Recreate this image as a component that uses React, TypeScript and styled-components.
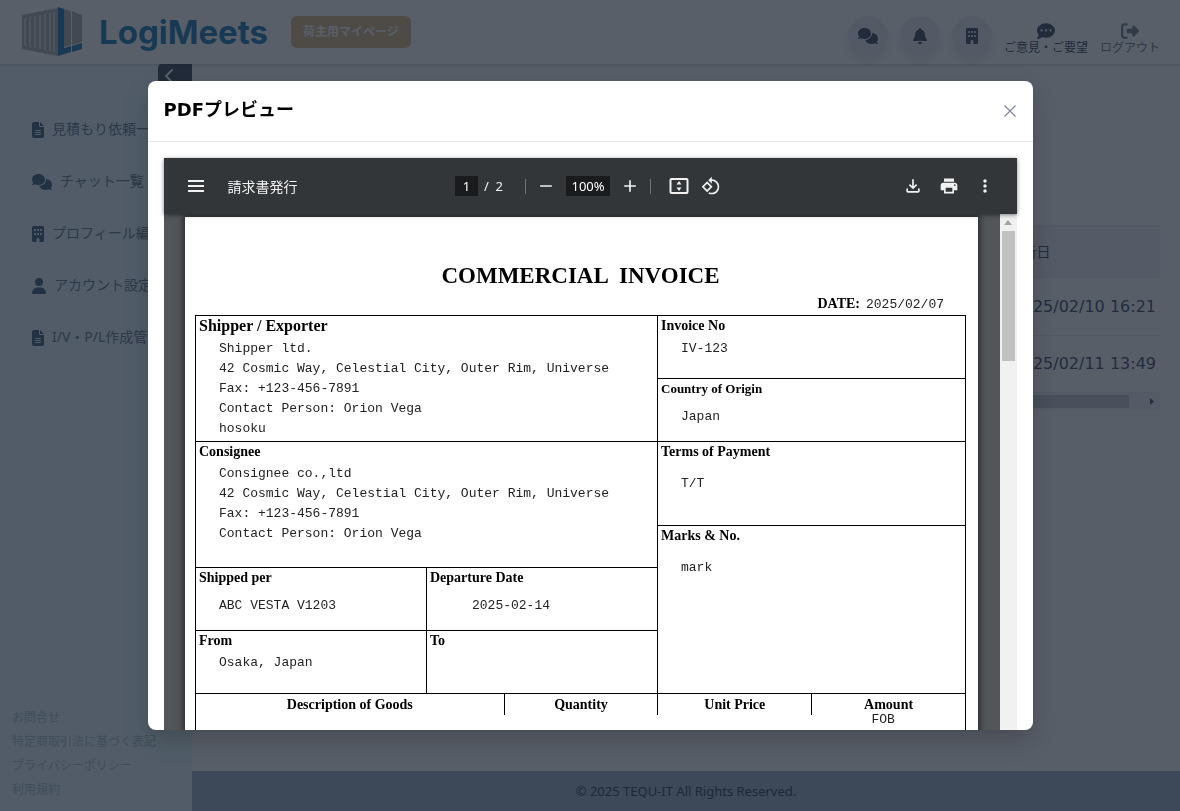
import React from "react";
import styled, { createGlobalStyle } from "styled-components";
import {
  FaBell,
  FaBuilding,
  FaChevronLeft,
  FaCommentDots,
  FaComments,
  FaFileLines,
  FaRightFromBracket,
  FaUser,
} from "react-icons/fa6";
import { MdAdd, MdMoreVert, MdOutlineFileDownload, MdPrint, MdRemove, MdRotate90DegreesCcw } from "react-icons/md";

const GlobalStyle = createGlobalStyle`
  *, *::before, *::after { box-sizing: border-box; }
  body {
    margin: 0;
    font-family: "Noto Sans", "Noto Sans CJK JP", sans-serif;
    font-size: 14px;
    background: #fffcfe;
  }
  button { font: inherit; color: inherit; background: none; border: 0; padding: 0; cursor: pointer; }
  a { color: inherit; text-decoration: none; }
  svg { display: block; flex: none; }
`;

/* ---------- page shell ---------- */

const Shell = styled.div`
  display: flex;
  flex-direction: column;
  min-height: 100vh;
`;

const TopBar = styled.header`
  display: flex;
  align-items: center;
  height: 64px;
  padding: 0 20px 0 22px;
  background: #fff;
  box-shadow: 0 1px 3px rgba(0, 0, 0, 0.2);
  z-index: 1;
`;

const Brand = styled.a`
  display: flex;
  align-items: center;
  gap: 16px;
  color: #2a7fbd;
  font: 700 33px/40px Inter, sans-serif;
`;

const RoleBadge = styled.span`
  margin-left: 23px;
  padding: 0 12px;
  border-radius: 6px;
  background: #dcb78c;
  color: #fff;
  font-size: 12px;
  font-weight: 700;
  line-height: 32px;
`;

const TopActions = styled.div`
  display: flex;
  align-items: center;
  gap: 12px;
  margin-left: auto;
  padding-top: 8px;
`;

const RoundButton = styled.button<{ $icon: number }>`
  display: grid;
  place-items: center;
  width: 40px;
  height: 40px;
  border-radius: 50%;
  background: #efedf4;
  color: #46516b;
  box-shadow: 0 6px 10px rgba(40, 50, 90, 0.1);
  svg { height: 16px; width: ${(p) => p.$icon}px; }
`;

const LabelledButton = styled.button<{ $soft?: boolean }>`
  display: flex;
  flex-direction: column;
  align-items: center;
  padding-top: 6px;
  color: ${(p) => (p.$soft ? "#7a8494" : "#46516b")};
  font-size: 12px;
  line-height: 16px;
  svg { width: 18px; height: 18px; }
`;

const Columns = styled.div`
  display: flex;
  flex: 1;
`;

const SideBar = styled.aside`
  display: flex;
  flex-direction: column;
  width: 192px;
  flex: none;
  background: #e6f6ff;
`;

const CollapseButton = styled.button`
  align-self: flex-end;
  width: 34px;
  height: 24px;
  padding: 0 4px;
  border-radius: 4px 0 0 0;
  background: #465064;
  color: #fff;
  svg { width: 16px; height: 16px; }
`;

const SideNav = styled.nav`
  display: flex;
  flex-direction: column;
  margin-top: 14px;
  padding-left: 32px;
`;

const SideLink = styled.a<{ $icon: number }>`
  display: flex;
  align-items: center;
  gap: 8px;
  height: 52px;
  color: #6b7f96;
  white-space: nowrap;
  overflow: hidden;
  svg { height: 16px; width: ${(p) => p.$icon}px; margin-top: 4px; color: #4b6486; }
`;

const LegalLinks = styled.nav`
  display: flex;
  flex-direction: column;
  margin-top: auto;
  padding: 0 12px 9px;
  color: #b1c1cf;
  font-size: 12px;
  line-height: 24px;
`;

const Content = styled.main`
  display: flex;
  flex-direction: column;
  flex: 1;
`;

const ListArea = styled.section`
  flex: 1;
  padding: 161px 20px 20px;
`;

const ListTable = styled.table`
  width: 150px;
  margin-left: auto;
  border-collapse: separate;
  border-spacing: 0;
  color: #4b5570;
  th {
    height: 54px;
    padding: 0 0 4px;
    border-top: 1px solid #e9e6f0;
    background: #f2edf8;
    text-align: left;
    font-weight: 400;
  }
  td {
    height: 57px;
    padding: 0 4px 2px;
    border-bottom: 1px solid #eae9ee;
    font: 16px "DejaVu Sans", sans-serif;
    white-space: nowrap;
  }
`;

const HorizontalScroll = styled.div`
  display: flex;
  align-items: center;
  justify-content: flex-end;
  gap: 21px;
  height: 17px;
  padding-right: 6px;
  background: #f4f0f8;
  color: #596275;
`;

const HorizontalThumb = styled.div`
  flex: 1;
  height: 13px;
  background: #cbcad2;
`;

const PageFooter = styled.footer`
  height: 40px;
  background: #a3b1cb;
  color: #3e475c;
  font-size: 13px;
  line-height: 40px;
  text-align: center;
`;

/* ---------- dialog ---------- */

const Backdrop = styled.div`
  position: fixed;
  inset: 0;
  z-index: 10;
  display: grid;
  place-items: center;
  background: rgba(17, 27, 40, 0.7);
`;

const Dialog = styled.section`
  display: flex;
  flex-direction: column;
  width: 75vw;
  height: 80vh;
  border-radius: 8px;
  overflow: hidden;
  background: #fff;
  box-shadow: 0 10px 24px rgba(0, 0, 0, 0.2);
`;

const DialogHeader = styled.header`
  display: flex;
  flex: none;
  align-items: center;
  justify-content: space-between;
  height: 61px;
  padding: 0 13px 0 16px;
  border-bottom: 1px solid #e5e7eb;
  h2 { margin: 0 0 2px; font: 700 18px/28px "DejaVu Sans", "Noto Sans CJK JP", sans-serif; }
`;

const DialogBody = styled.div`
  display: flex;
  flex: 1;
  min-height: 0;
  padding: 16px 16px 0;
`;

const Viewer = styled.div`
  display: flex;
  flex-direction: column;
  flex: 1;
  min-width: 0;
  background: #525659;
`;

const ViewerBar = styled.div`
  position: relative;
  z-index: 1;
  display: grid;
  grid-template-columns: 1fr auto 1fr;
  align-items: center;
  flex: none;
  height: 56px;
  padding: 0 22px;
  background: #323639;
  color: #f1f1f1;
  box-shadow: 0 1px 4px rgba(0, 0, 0, 0.5);
`;

const BarGroup = styled.div<{ $gap: number; $align?: string }>`
  display: flex;
  align-items: center;
  gap: ${(p) => p.$gap}px;
  justify-content: ${(p) => p.$align ?? "flex-start"};
`;

const FitGroup = styled(BarGroup)`
  padding: 0 4px 0 8px;
`;

const BarInput = styled.input<{ $width: number }>`
  width: ${(p) => p.$width}px;
  height: 20px;
  padding: 0;
  border: 0;
  background: #191b1c;
  color: #fff;
  font: 13px "Noto Sans", sans-serif;
  text-align: center;
`;

const PageTotal = styled.span`
  margin: 0 12px 0 -4px;
  font-size: 13px;
`;

const BarDivider = styled.span`
  width: 1px;
  height: 15px;
  background: #707477;
`;

const BarButton = styled.button`
  display: grid;
  place-items: center;
  svg { width: 20px; height: 20px; }
`;

const ViewerScroll = styled.div`
  display: flex;
  flex: 1;
  min-height: 0;
`;

const PageArea = styled.div`
  flex: 1;
  min-width: 0;
  padding: 3px 21px 0;
  overflow: hidden;
`;

const ScrollTrack = styled.div`
  display: flex;
  flex-direction: column;
  align-items: center;
  width: 17px;
  background: #f1f1f1;
  svg { margin: 6px 0; }
`;

const ScrollThumb = styled.div`
  width: 13px;
  height: 130px;
  background: #c1c1c1;
`;

/* ---------- invoice sheet ---------- */

const Sheet = styled.article`
  max-width: 793px;
  min-height: 1122px;
  margin: 0 auto;
  padding: 45px 12px 0 10px;
  background: #fff;
  color: #000;
  font-family: "Liberation Serif", serif;
  box-shadow: 0 0 6px 2px rgba(0, 0, 0, 0.5);
  h1 { margin: 0; font-size: 23px; line-height: 28px; text-align: center; white-space: pre; }
`;

const Entry = styled.span`
  color: #222;
  font: 13px/20px "Liberation Mono", monospace;
`;

const DateLine = styled.p`
  display: flex;
  justify-content: flex-end;
  align-items: baseline;
  gap: 6px;
  margin: 3px 0 0;
  padding-right: 22px;
  font-size: 14px;
  line-height: 22px;
`;

const FormGrid = styled.div`
  display: grid;
  grid-template-columns: 3fr 2fr;
  border-right: 1px solid #000;
`;

const FormRows = styled.div<{ $rows: string }>`
  display: grid;
  grid-template-rows: ${(p) => p.$rows};
`;

const FormPair = styled.div`
  display: grid;
  grid-template-columns: 1fr 1fr;
`;

const FormCell = styled.div<{ $gap: number; $indent: number; $size: number }>`
  display: flex;
  flex-direction: column;
  padding-left: 3px;
  border-top: 1px solid #000;
  border-left: 1px solid #000;
  strong { font-size: ${(p) => p.$size}px; line-height: 20px; }
  strong + ${Entry} { margin-top: ${(p) => p.$gap}px; }
  ${Entry} { padding-left: ${(p) => p.$indent}px; }
`;

const GoodsTable = styled.table`
  width: 100%;
  height: 430px;
  table-layout: fixed;
  border-collapse: separate;
  border-spacing: 0;
  border: 1px solid #000;
  th {
    height: 21px;
    padding: 0;
    border-left: 1px solid #000;
    font-size: 14px;
    line-height: 20px;
  }
  th:first-child { width: 40%; border-left: 0; }
  td { padding: 0 10px 0 0; text-align: center; vertical-align: top; line-height: 8px; }
  ${Entry} { line-height: 8px; }
`;

const sideItems = [
  { icon: <FaFileLines />, size: 12, label: "見積もり依頼一覧" },
  { icon: <FaComments />, size: 20, label: "チャット一覧" },
  { icon: <FaBuilding />, size: 12, label: "プロフィール編集" },
  { icon: <FaUser />, size: 14, label: "アカウント設定" },
  { icon: <FaFileLines />, size: 12, label: "I/V・P/L作成管理" },
];

const legalItems = ["お問合せ", "特定商取引法に基づく表記", "プライバシーポリシー", "利用規約"];

const updates = ["2025/02/10 16:21", "2025/02/11 13:49"];

type FieldProps = { label: string; lines?: string[]; gap?: number; indent?: number; size?: number };

function Field({ label, lines = [], gap = 2, indent = 20, size = 14 }: FieldProps) {
  return (
    <FormCell $gap={gap} $indent={indent} $size={size}>
      <strong>{label}</strong>
      {lines.map((line) => (
        <Entry key={line}>{line}</Entry>
      ))}
    </FormCell>
  );
}

function ContainerLogo() {
  return (
    <svg width="61" height="50" viewBox="0 0 61 50" aria-hidden="true">
      <path d="M0 8 36 1v48L0 42Z" fill="#b5b5b5" />
      <path d="M3 11v28M8 10v30M13 9v32M18 8v34M23 7v36M28 6v38M32 5v40" stroke="#e8e8e8" strokeWidth="1.500" />
      <path d="M42 2 49 4v34l-7 2Z" fill="#b5b5b5" />
      <path d="M50 4 60 8v27l-10 3Z" fill="#b5b5b5" />
      <path d="M36 0 42 2v39l7-2v6l-13 4Z" fill="#2a7fbd" />
      <path d="M50 39 60 36v6l-10 3Z" fill="#2a7fbd" />
    </svg>
  );
}

function Invoice() {
  return (
    <Sheet>
      <h1>{"COMMERCIAL  INVOICE"}</h1>
      <DateLine>
        <strong>DATE:</strong>
        <Entry>2025/02/07</Entry>
      </DateLine>
      <FormGrid>
        <FormRows $rows="126px 126px 63px 63px">
          <Field
            size={16}
            gap={3}
            label="Shipper / Exporter"
            lines={[
              "Shipper ltd.",
              "42 Cosmic Way, Celestial City, Outer Rim, Universe",
              "Fax: +123-456-7891",
              "Contact Person: Orion Vega",
              "hosoku",
            ]}
          />
          <Field
            label="Consignee"
            lines={[
              "Consignee co.,ltd",
              "42 Cosmic Way, Celestial City, Outer Rim, Universe",
              "Fax: +123-456-7891",
              "Contact Person: Orion Vega",
            ]}
          />
          <FormPair>
            <Field label="Shipped per" lines={["ABC VESTA V1203"]} gap={8} />
            <Field label="Departure Date" lines={["2025-02-14"]} gap={8} indent={42} />
          </FormPair>
          <FormPair>
            <Field label="From" lines={["Osaka, Japan"]} />
            <Field label="To" />
          </FormPair>
        </FormRows>
        <FormRows $rows="63px 63px 84px 168px">
          <Field label="Invoice No" lines={["IV-123"]} gap={3} />
          <Field label="Country of Origin" lines={["Japan"]} gap={8} size={13} />
          <Field label="Terms of Payment" lines={["T/T"]} gap={12} />
          <Field label="Marks & No." lines={["mark"]} gap={12} />
        </FormRows>
      </FormGrid>
      <GoodsTable>
        <thead>
          <tr>
            <th scope="col">Description of Goods</th>
            <th scope="col">Quantity</th>
            <th scope="col">Unit Price</th>
            <th scope="col">Amount</th>
          </tr>
        </thead>
        <tbody>
          <tr>
            <td />
            <td />
            <td />
            <td>
              <Entry>FOB</Entry>
            </td>
          </tr>
        </tbody>
      </GoodsTable>
    </Sheet>
  );
}

function PdfViewer() {
  return (
    <Viewer>
      <ViewerBar>
        <BarGroup $gap={22}>
          <BarButton aria-label="メニュー">
            <svg viewBox="2 0 16 20">
              <path d="M2 5h16M2 10h16M2 15h16" stroke="currentColor" strokeWidth="2" />
            </svg>
          </BarButton>
          <span>請求書発行</span>
        </BarGroup>
        <BarGroup $gap={10}>
          <BarInput $width={23} aria-label="ページ" defaultValue="1" />
          <PageTotal>/&nbsp; 2</PageTotal>
          <BarDivider />
          <BarButton aria-label="縮小"><MdRemove /></BarButton>
          <BarInput $width={44} aria-label="倍率" defaultValue="100%" />
          <BarButton aria-label="拡大"><MdAdd /></BarButton>
          <BarDivider />
          <FitGroup $gap={12}>
            <BarButton aria-label="ページに合わせる">
              <svg viewBox="0 0 20 20" fill="none">
                <rect x="1.5" y="3" width="17" height="14" rx="1" stroke="currentColor" strokeWidth="2" />
                <path d="M10 5 7.500 8.500h5ZM10 15l-2.500-3.500h5Z" fill="currentColor" />
              </svg>
            </BarButton>
            <BarButton aria-label="回転"><MdRotate90DegreesCcw /></BarButton>
          </FitGroup>
        </BarGroup>
        <BarGroup $gap={16} $align="flex-end">
          <BarButton aria-label="ダウンロード"><MdOutlineFileDownload /></BarButton>
          <BarButton aria-label="印刷"><MdPrint /></BarButton>
          <BarButton aria-label="その他"><MdMoreVert /></BarButton>
        </BarGroup>
      </ViewerBar>
      <ViewerScroll>
        <PageArea>
          <Invoice />
        </PageArea>
        <ScrollTrack>
          <svg width="8" height="5" viewBox="0 0 8 5" aria-hidden="true">
            <path d="M0 5h8L4 0Z" fill="#a3a3a3" />
          </svg>
          <ScrollThumb />
        </ScrollTrack>
      </ViewerScroll>
    </Viewer>
  );
}

export default function App() {
  return (
    <>
      <GlobalStyle />
      <Shell>
        <TopBar>
          <Brand href="#">
            <ContainerLogo />
            LogiMeets
          </Brand>
          <RoleBadge>荷主用マイページ</RoleBadge>
          <TopActions>
            <RoundButton $icon={20} aria-label="チャット"><FaComments /></RoundButton>
            <RoundButton $icon={14} aria-label="通知"><FaBell /></RoundButton>
            <RoundButton $icon={12} aria-label="会社"><FaBuilding /></RoundButton>
            <LabelledButton>
              <FaCommentDots />
              ご意見・ご要望
            </LabelledButton>
            <LabelledButton $soft>
              <FaRightFromBracket />
              ログアウト
            </LabelledButton>
          </TopActions>
        </TopBar>
        <Columns>
          <SideBar>
            <CollapseButton aria-label="閉じる"><FaChevronLeft /></CollapseButton>
            <SideNav>
              {sideItems.map((item) => (
                <SideLink href="#" key={item.label} $icon={item.size}>
                  {item.icon}
                  {item.label}
                </SideLink>
              ))}
            </SideNav>
            <LegalLinks>
              {legalItems.map((label) => (
                <a href="#" key={label}>{label}</a>
              ))}
            </LegalLinks>
          </SideBar>
          <Content>
            <ListArea>
              <ListTable>
                <thead>
                  <tr><th scope="col">更新日</th></tr>
                </thead>
                <tbody>
                  {updates.map((date) => (
                    <tr key={date}><td>{date}</td></tr>
                  ))}
                </tbody>
              </ListTable>
              <HorizontalScroll>
                <HorizontalThumb />
                <svg width="4" height="7" viewBox="0 0 4 7" aria-hidden="true">
                  <path d="M0 0v7l4-3.500Z" fill="currentColor" />
                </svg>
              </HorizontalScroll>
            </ListArea>
            <PageFooter>© 2025 TEQU-IT All Rights Reserved.</PageFooter>
          </Content>
        </Columns>
      </Shell>
      <Backdrop>
        <Dialog role="dialog" aria-modal="true" aria-labelledby="preview-title">
          <DialogHeader>
            <h2 id="preview-title">PDFプレビュー</h2>
            <BarButton aria-label="閉じる">
              <svg viewBox="3 0 14 20">
                <path d="m4.500 4.500 11 11m0-11-11 11" stroke="#7b8494" strokeWidth="1.100" />
              </svg>
            </BarButton>
          </DialogHeader>
          <DialogBody>
            <PdfViewer />
          </DialogBody>
        </Dialog>
      </Backdrop>
    </>
  );
}
